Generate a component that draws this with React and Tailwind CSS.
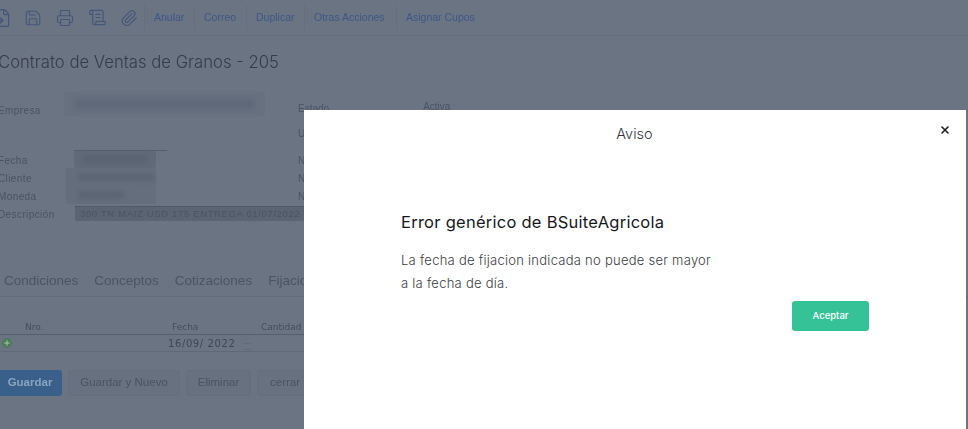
import React from "react";
import { Save, Printer, ScrollText, Paperclip, FileSymlink, X, Plus } from "lucide-react";

const tools = [
  ["Anular", "w-[50px]"],
  ["Correo", "w-[52px]"],
  ["Duplicar", "w-[58px]"],
  ["Otras Acciones", "w-[92px]"],
  ["Asignar Cupos", "w-[90px]"],
];

function Row({ label, children, right }) {
  return (
    <div className="flex h-[18px] items-center">
      <div className="w-[298px] flex items-center shrink-0 overflow-hidden h-full">
        <span className="w-[68px] shrink-0 -ml-[2px] pt-[2px] text-[10px] tracking-[0.4px] text-[#4a5361]">{label}</span>
        {children}
      </div>
      <span className="pt-[2px] text-[10px] text-[#4a5361]">{right}</span>
    </div>
  );
}

export default function App() {
  return (
    <div className="relative w-[968px] h-[429px] overflow-hidden bg-[#6b7483] font-['Liberation_Sans',sans-serif]">
      <div className="blur-[0.5px]">
        {/* Toolbar */}
        <div className="h-[36px] border-b border-[#666f7d] flex items-center overflow-hidden">
          <div className="flex items-center -ml-[8px] w-[152px] shrink-0 text-[#43577a]">
            <FileSymlink size={20} strokeWidth={1.5} className="mr-[12px] shrink-0" />
            <Save size={18} strokeWidth={1.5} className="mr-[14px] shrink-0" />
            <Printer size={18} strokeWidth={1.5} className="mr-[14px] shrink-0" />
            <ScrollText size={19} strokeWidth={1.5} className="mr-[13px] shrink-0" />
            <Paperclip size={18} strokeWidth={1.5} className="shrink-0" />
          </div>
          {tools.map(([t, w]) => (
            <div key={t} className={`${w} shrink-0 h-[26px] border-l border-[#666f7d] flex items-center pl-[9px] text-[10.5px] font-medium text-[#3d5787] whitespace-nowrap`}>
              {t}
            </div>
          ))}
        </div>

        {/* Title */}
        <h1 className="-ml-[2px] mt-[15px] h-[22px] leading-[22px] text-[16.7px] font-['Inter',sans-serif] font-light text-[#343c4a] whitespace-nowrap">
          Contrato de Ventas de Granos - 205
        </h1>

        {/* Form */}
        <div className="mt-[19px] h-[24px] flex items-center">
          <div className="w-[298px] flex items-center shrink-0">
            <span className="w-[66px] shrink-0 -ml-[2px] pt-[12px] text-[10px] tracking-[0.4px] text-[#4a5361]">Empresa</span>
            <div className="w-[201px] h-[24px] bg-[#687180] flex items-center justify-center">
              <div className="w-[180px] h-[10px] bg-[#5e6776] blur-[3px]" />
            </div>
          </div>
          <span className="pt-[9px] text-[10px] text-[#4a5361]">Estado</span>
          <span className="ml-[94px] pt-[4px] text-[10px] text-[#4a5361]">Activa</span>
        </div>
        <div className="h-[34px] flex items-center pl-[298px] text-[10px] text-[#4a5361]">U</div>

        <div className="flex h-[18px] items-center">
          <div className="w-[298px] flex items-center shrink-0 h-full">
            <span className="w-[76px] shrink-0 -ml-[2px] pt-[2px] text-[10px] tracking-[0.4px] text-[#4a5361]">Fecha</span>
            <div className="relative w-[82px] h-[18px] rounded-[3px] bg-[#616a79] flex items-center justify-center">
              <div className="absolute left-0 top-0 w-[93px] h-px bg-[#555e6c]" />
              <div className="w-[64px] h-[8px] bg-[#5a6372] blur-[2px]" />
            </div>
          </div>
          <span className="pt-[2px] text-[10px] text-[#4a5361]">N</span>
        </div>
        <Row label="Cliente" right="N">
          <div className="w-[90px] h-full bg-[#656e7d] flex items-center justify-end pr-[2px]">
            <div className="w-[76px] h-[8px] bg-[#5c6574] blur-[2px]" />
          </div>
        </Row>
        <Row label="Moneda" right="N">
          <div className="w-[90px] h-full bg-[#656e7d] flex items-center pl-[12px]">
            <div className="w-[46px] h-[8px] bg-[#5c6574] blur-[2px]" />
          </div>
        </Row>
        <div className="flex h-[18px] items-center">
          <div className="w-[304px] flex items-center shrink-0 h-full">
            <span className="w-[77px] shrink-0 -ml-[2px] pt-[3px] text-[10px] tracking-[0.4px] text-[#4a5361]">Descripción</span>
            <div className="flex-1 h-[15px] mt-[1px] bg-[#5b6473] border-t border-[#4f5866] pl-[5px] text-[9.5px] leading-[14px] tracking-[0.65px] text-[#4b5462] whitespace-nowrap overflow-hidden">
              300 TN MAIZ USD 175 ENTREGA 01/07/2022
            </div>
          </div>
        </div>

        {/* Tabs */}
        <div className="mt-[47px] h-[28px] border-b border-[#636c7a] flex items-center pl-[4px] gap-[16px] pb-[2px] text-[13.5px] text-[#4b5462] whitespace-nowrap">
          <span>Condiciones</span>
          <span>Conceptos</span>
          <span>Cotizaciones</span>
          <span>Fijaciones</span>
        </div>

        {/* Table */}
        <div className="mt-[25px] h-[13px] w-[304px] border-b border-[#565f6d] flex items-center text-[9px] text-[#454e5c] font-['DejaVu_Sans',sans-serif] whitespace-nowrap">
          <span className="ml-[25px] w-[147px]">Nro.</span>
          <span className="w-[89px]">Fecha</span>
          <span>Cantidad</span>
        </div>
        <div className="h-[17px] w-[304px] border-b border-[#606977] flex items-center">
          <span className="ml-[2px] w-[10px] h-[10px] rounded-full bg-[#4d7c58] flex items-center justify-center text-[#a9c2ad]">
            <Plus size={8} strokeWidth={3} />
          </span>
          <span className="ml-[156px] text-[10px] tracking-[0.6px] text-[#3f4755] font-['DejaVu_Sans',sans-serif] whitespace-nowrap">16/09/ 2022</span>
          <span className="ml-[8px] mt-[6px] w-[8px] h-[7px] border-y border-[#636c7a]" />
        </div>

        {/* Buttons */}
        <div className="mt-[18px] -ml-[2px] flex gap-[6px] text-[11.5px] whitespace-nowrap">
          <button className="h-[26px] w-[64px] rounded-[3px] bg-[#38608a] text-[#8ba3bf] font-bold">Guardar</button>
          <button className="h-[26px] w-[112px] rounded-[3px] bg-[#687180] border border-[#656e7c] text-[#4a5361]">Guardar y Nuevo</button>
          <button className="h-[26px] w-[65px] rounded-[3px] bg-[#687180] border border-[#656e7c] text-[#4a5361]">Eliminar</button>
          <button className="h-[26px] w-[60px] rounded-[3px] bg-[#687180] border border-[#656e7c] text-[#4a5361] text-left pl-[12px]">cerrar</button>
        </div>
      </div>

      {/* Modal */}
      <div className="absolute left-[304px] top-[110px] w-[662px] h-[319px] bg-white font-['Inter',sans-serif]">
        <div className="relative h-[46px] flex items-center justify-center">
          <span className="pt-[2px] text-[14.5px] font-light text-[#33363d] -ml-[1px]">Aviso</span>
          <X className="absolute right-[15px] top-[14px] text-[#1c1f24]" size={12} strokeWidth={3.2} />
        </div>
        <div className="pl-[97px]">
          <h2 className="mt-[55px] h-[22px] leading-[22px] text-[16.5px] tracking-[0.26px] font-normal text-[#16181c] whitespace-nowrap">
            Error genérico de BSuiteAgricola
          </h2>
          <p className="mt-[16px] w-[330px] text-[13px] leading-[23px] font-light text-[#3a3d44] tracking-[0.26px]">
            La fecha de fijacion indicada no puede ser mayor<br />a la fecha de día.
          </p>
          <div className="flex justify-end w-[468px] mt-[6px]">
            <button className="w-[77px] h-[30px] pt-[1px] rounded-[3px] bg-[#36c297] text-white text-[9.5px] font-medium">Aceptar</button>
          </div>
        </div>
      </div>
    </div>
  );
}
